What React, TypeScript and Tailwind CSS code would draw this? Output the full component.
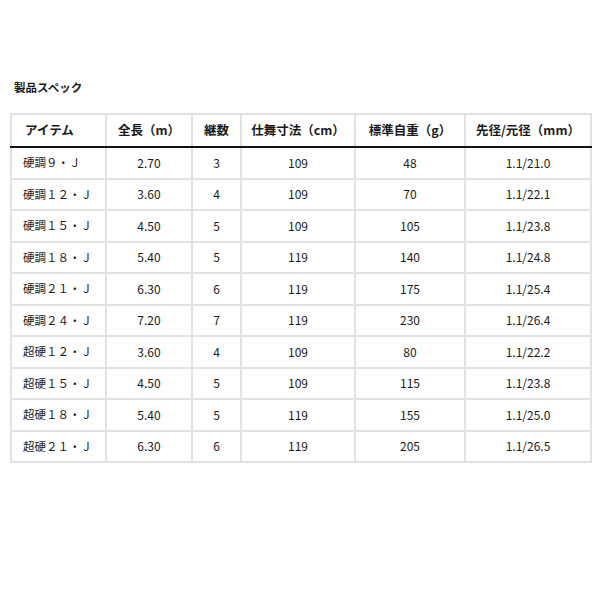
const rows = [
  ["硬調９・Ｊ", "2.70", "3", "109", "48", "1.1/21.0"],
  ["硬調１２・Ｊ", "3.60", "4", "109", "70", "1.1/22.1"],
  ["硬調１５・Ｊ", "4.50", "5", "109", "105", "1.1/23.8"],
  ["硬調１８・Ｊ", "5.40", "5", "119", "140", "1.1/24.8"],
  ["硬調２１・Ｊ", "6.30", "6", "119", "175", "1.1/25.4"],
  ["硬調２４・Ｊ", "7.20", "7", "119", "230", "1.1/26.4"],
  ["超硬１２・Ｊ", "3.60", "4", "109", "80", "1.1/22.2"],
  ["超硬１５・Ｊ", "4.50", "5", "109", "115", "1.1/23.8"],
  ["超硬１８・Ｊ", "5.40", "5", "119", "155", "1.1/25.0"],
  ["超硬２１・Ｊ", "6.30", "6", "119", "205", "1.1/26.5"],
];

export default function App() {
  return (
    <div className="w-[600px] h-[600px] bg-white pt-[79px] pl-[10px] text-[#1a1a1a] font-['Noto_Sans_CJK_JP','Noto_Sans',sans-serif]">
      {/* section title */}
      <h2 className="pl-[4px] text-[11.5px] leading-[16px] font-bold">製品スペック</h2>

      <table className="mt-[18px] w-[582px] table-fixed border-collapse border-2 border-[#e2e2e2]">
        <thead>
          <tr className="text-[12.5px] font-bold whitespace-nowrap">
            <th className="w-[95px] h-[33px] pl-[13px] text-left border-2 border-[#e2e2e2] border-b-[#111]">アイテム</th>
            <th className="w-[86px] border-2 border-[#e2e2e2] border-b-[#111]">全長（m）</th>
            <th className="w-[49px] border-2 border-[#e2e2e2] border-b-[#111]">継数</th>
            <th className="w-[114px] border-2 border-[#e2e2e2] border-b-[#111]">仕舞寸法（cm）</th>
            <th className="w-[110px] border-2 border-[#e2e2e2] border-b-[#111]">標準自重（g）</th>
            <th className="w-[126px] border-2 border-[#e2e2e2] border-b-[#111]">先径/元径（mm）</th>
          </tr>
        </thead>
        <tbody>
          {rows.map((r) => (
            <tr key={r[0]} className="text-[12px] text-[#1a1a1a] whitespace-nowrap">
              <td className="h-[31.5px] pl-[11px] text-left text-[11.5px] border-2 border-[#e2e2e2]">{r[0]}</td>
              {r.slice(1).map((v, i) => (
                <td key={i} className="text-center border-2 border-[#e2e2e2]">{v}</td>
              ))}
            </tr>
          ))}
        </tbody>
      </table>
    </div>
  );
}
